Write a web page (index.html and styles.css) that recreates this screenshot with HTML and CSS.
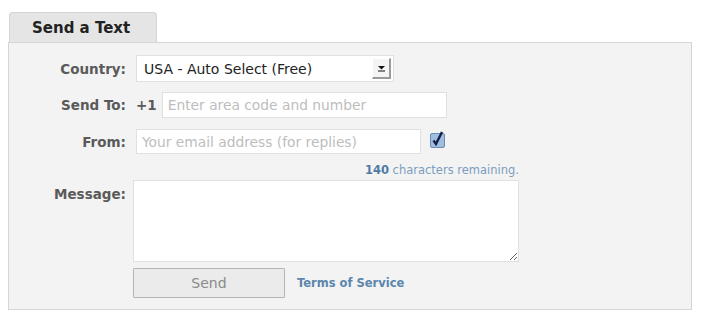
FILE: index.html
```html
<!DOCTYPE html>
<html lang="en">
<head>
    <meta charset="UTF-8">
    <meta name="viewport" content="width=device-width, initial-scale=1.0">
    <title>Send a Text</title>
    <link rel="stylesheet" href="styles.css">
</head>
<body>
    <div class="tab">Send a Text</div>

    <form class="panel">
        <div class="row row-country">
            <label class="label">Country:</label>
            <div class="select">
                <span class="select-value">USA - Auto Select (Free)</span>
                <span class="select-btn">
                    <svg width="9" height="7" viewBox="0 0 9 7">
                        <path d="M1 1h7L4.5 4.5z" fill="#111"/>
                        <rect x="1" y="5.5" width="7" height="1" fill="#111"/>
                    </svg>
                </span>
            </div>
        </div>

        <div class="row row-to">
            <label class="label">Send To:</label>
            <span class="prefix">+1</span>
            <input class="field field-phone" type="text" placeholder="Enter area code and number">
        </div>

        <div class="row row-from">
            <label class="label">From:</label>
            <input class="field field-email" type="text" placeholder="Your email address (for replies)">
            <span class="check">
                <svg width="16" height="17" viewBox="0 0 16 17">
                    <rect x="0.5" y="2.5" width="14" height="14" rx="1.5" fill="#9fbddc" stroke="#6a8cb3"/>
                    <path d="M3.5 9.5l2.5 3.5 6-12" fill="none" stroke="#14204a" stroke-width="2.4"/>
                </svg>
            </span>
        </div>

        <div class="counter"><b>140</b> characters remaining.</div>

        <div class="row row-message">
            <label class="label">Message:</label>
            <textarea class="message"></textarea>
        </div>

        <div class="row row-actions">
            <span class="label"></span>
            <button type="button" class="send">Send</button>
            <a class="terms" href="#">Terms of Service</a>
        </div>
    </form>
</body>
</html>
```

FILE: styles.css
```css
body {
    margin: 12px 8px;
    font-family: "DejaVu Sans", Verdana, sans-serif;
    background-color: #fff;
    color: #555;
}

/* Tab */
.tab {
    width: 148px;
    height: 30px;
    margin-left: 1px;
    box-sizing: border-box;
    padding-left: 22px;
    line-height: 31px;
    background-color: #e5e5e5;
    border: 1px solid #d4d4d4;
    border-bottom: none;
    border-radius: 4px 4px 0 0;
    font-size: 15px;
    font-weight: bold;
    color: #222;
}

/* Panel */
.panel {
    width: 684px;
    height: 268px;
    box-sizing: border-box;
    padding-top: 12px;
    background-color: #f3f3f3;
    border: 1px solid #d6d6d6;
}

.row {
    display: flex;
    align-items: center;
}

.label {
    width: 117px;
    flex: none;
    text-align: right;
    font-size: 13.5px;
    font-weight: bold;
    color: #5a5a5a;
    margin-right: 10px;
}

/* Select */
.select {
    width: 258px;
    height: 27px;
    box-sizing: border-box;
    display: flex;
    align-items: center;
    justify-content: space-between;
    padding: 0 2px 0 7px;
    background-color: #fff;
    border: 1px solid #e0e0e0;
    font-size: 14px;
    color: #222;
}

.select-btn {
    width: 19px;
    height: 21px;
    box-sizing: border-box;
    display: flex;
    align-items: center;
    justify-content: center;
    background-color: #f4f4f4;
    border-right: 2px solid #9a9a9a;
    border-bottom: 2px solid #9a9a9a;
    border-top: 1px solid #fff;
    border-left: 1px solid #fff;
}

/* Inputs */
.row-to {
    margin-top: 10px;
}

.prefix {
    font-size: 13.5px;
    font-weight: bold;
    color: #5a5a5a;
    margin: 0 5px 0 0;
}

.field {
    height: 26px;
    box-sizing: border-box;
    padding: 0 5px;
    border: 1px solid #e0e0e0;
    background-color: #fff;
    font-family: inherit;
    font-size: 13.8px;
    outline: none;
}

.field::placeholder {
    color: #bdbdbd;
}

.field-phone {
    width: 285px;
}

.row-from {
    margin-top: 11px;
}

.field-email {
    width: 285px;
    height: 25px;
}

.check {
    display: flex;
    margin-left: 9px;
    margin-top: -4px;
}

.counter {
    width: 510px;
    margin-top: 9px;
    text-align: right;
    font-size: 11.5px;
    color: #7c9dbf;
}

.counter b {
    color: #4f7aa6;
}

/* Message */
.row-message {
    align-items: flex-start;
    margin-top: 3px;
}

.row-message .label {
    margin-top: 6px;
    margin-right: 7px;
}

.message {
    width: 386px;
    height: 82px;
    box-sizing: border-box;
    margin: 0;
    border: 1px solid #e0e0e0;
    background-color: #fff;
    resize: both;
    outline: none;
}

/* Actions */
.row-actions {
    margin-top: 6px;
}

.row-actions .label {
    margin-right: 7px;
}

.send {
    width: 152px;
    height: 30px;
    background-color: #ebebeb;
    border: 1px solid #b5b5b5;
    border-radius: 1px;
    font-family: inherit;
    font-size: 14px;
    color: #8a8a8a;
    cursor: pointer;
}

.terms {
    margin-left: 12px;
    font-size: 11.5px;
    font-weight: bold;
    color: #5b86ad;
    text-decoration: none;
}
```
